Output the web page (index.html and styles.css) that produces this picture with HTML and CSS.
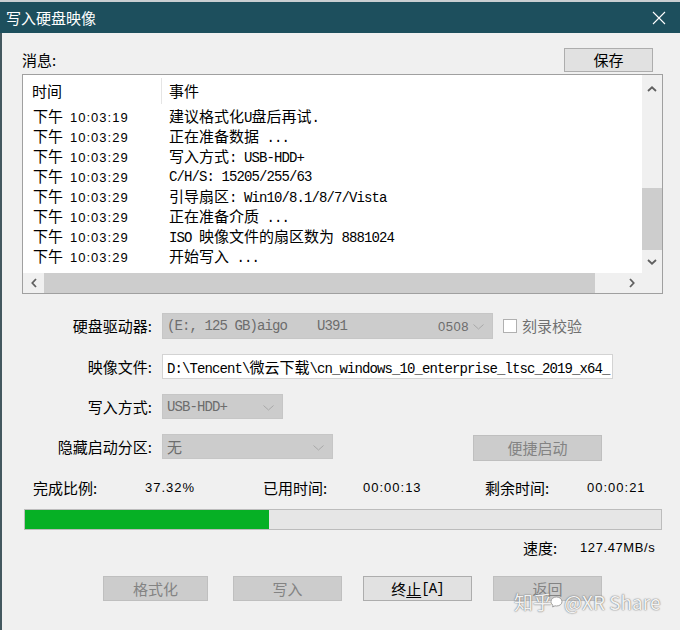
FILE: index.html
```html
<!DOCTYPE html>
<html lang="zh-CN">
<head>
<meta charset="utf-8">
<title>写入硬盘映像</title>
<link rel="stylesheet" href="styles.css">
</head>
<body>
<div class="window">
  <div class="titlebar">
    <span class="title">写入硬盘映像</span>
    <svg class="close" width="14" height="14" viewBox="0 0 14 14"><path d="M1 1L13 13M13 1L1 13" stroke="#fff" stroke-width="1.1" fill="none"/></svg>
  </div>
  <div class="body">
    <div class="msg-head">
      <span class="msg-label">消息:</span>
      <div class="btn save">保存</div>
    </div>
    <div class="listbox">
      <div class="lb-main">
        <div class="lb-content">
          <div class="lb-header"><div class="hcol1">时间</div><div class="hcol2">事件</div></div>
          <div class="row"><div class="tcol"><span class="ampm">下午</span><span class="time">10:03:19</span></div><div class="ecol"><span class="c">建议格式化</span>U<span class="c">盘后再试</span>.</div></div>
          <div class="row"><div class="tcol"><span class="ampm">下午</span><span class="time">10:03:29</span></div><div class="ecol"><span class="c">正在准备数据</span> ...</div></div>
          <div class="row"><div class="tcol"><span class="ampm">下午</span><span class="time">10:03:29</span></div><div class="ecol"><span class="c">写入方式</span>: USB-HDD+</div></div>
          <div class="row"><div class="tcol"><span class="ampm">下午</span><span class="time">10:03:29</span></div><div class="ecol">C/H/S: 15205/255/63</div></div>
          <div class="row"><div class="tcol"><span class="ampm">下午</span><span class="time">10:03:29</span></div><div class="ecol"><span class="c">引导扇区</span>: Win10/8.1/8/7/Vista</div></div>
          <div class="row"><div class="tcol"><span class="ampm">下午</span><span class="time">10:03:29</span></div><div class="ecol"><span class="c">正在准备介质</span> ...</div></div>
          <div class="row"><div class="tcol"><span class="ampm">下午</span><span class="time">10:03:29</span></div><div class="ecol">ISO <span class="c">映像文件的扇区数为</span> 8881024</div></div>
          <div class="row"><div class="tcol"><span class="ampm">下午</span><span class="time">10:03:29</span></div><div class="ecol"><span class="c">开始写入</span> ...</div></div>
        </div>
        <div class="vscroll">
          <div class="sb-btn up"><svg width="10" height="6" viewBox="0 0 10 6"><path d="M1 5L5 1.3L9 5" stroke="#606060" stroke-width="1.8" fill="none"/></svg></div>
          <div class="sb-track"><div class="vthumb"></div></div>
          <div class="sb-btn down"><svg width="10" height="6" viewBox="0 0 10 6"><path d="M1 1L5 4.7L9 1" stroke="#606060" stroke-width="1.8" fill="none"/></svg></div>
        </div>
      </div>
      <div class="lb-bottom">
        <div class="hscroll">
          <div class="sb-hbtn"><svg width="6" height="10" viewBox="0 0 6 10"><path d="M5 1L1.3 5L5 9" stroke="#606060" stroke-width="1.8" fill="none"/></svg></div>
          <div class="hthumb"></div>
          <div class="sb-hspace"></div>
          <div class="sb-hbtn"><svg width="6" height="10" viewBox="0 0 6 10"><path d="M1 1L4.7 5L1 9" stroke="#606060" stroke-width="1.8" fill="none"/></svg></div>
        </div>
        <div class="corner"></div>
      </div>
    </div>

    <div class="form">
      <div class="frow r1">
        <span class="lbl">硬盘驱动器:</span>
        <div class="combo w331">
          <span class="mono">(E:, 125 GB)aigo</span><span class="mono u391">U391</span><span class="sans n0508">0508</span>
          <svg class="chev" width="11" height="6" viewBox="0 0 11 6"><path d="M0.5 0.5L5.5 5L10.5 0.5" stroke="#a8a8a8" stroke-width="1" fill="none"/></svg>
        </div>
        <div class="checkbox"></div>
        <span class="cblabel">刻录校验</span>
      </div>
      <div class="frow">
        <span class="lbl">映像文件:</span>
        <div class="input"><span class="mono">D:\Tencent\<span class="c">微云下载</span>\cn_windows_10_enterprise_ltsc_2019_x64_</span></div>
      </div>
      <div class="frow">
        <span class="lbl">写入方式:</span>
        <div class="combo w121">
          <span class="mono">USB-HDD+</span>
          <svg class="chev" width="11" height="6" viewBox="0 0 11 6"><path d="M0.5 0.5L5.5 5L10.5 0.5" stroke="#a8a8a8" stroke-width="1" fill="none"/></svg>
        </div>
      </div>
      <div class="frow">
        <span class="lbl">隐藏启动分区:</span>
        <div class="combo w171">
          <span class="cjk">无</span>
          <svg class="chev" width="11" height="6" viewBox="0 0 11 6"><path d="M0.5 0.5L5.5 5L10.5 0.5" stroke="#a8a8a8" stroke-width="1" fill="none"/></svg>
        </div>
        <div class="btn disabled quick">便捷启动</div>
      </div>
    </div>

    <div class="stats">
      <span class="s-l1">完成比例:</span>
      <span class="num s-v1">37.32%</span>
      <span class="s-l2">已用时间:</span>
      <span class="num s-v2">00:00:13</span>
      <span class="s-l3">剩余时间:</span>
      <span class="num">00:00:21</span>
    </div>

    <div class="progress"><div class="fill" style="width: 38.4%"></div></div>

    <div class="speed">
      <span class="sp-l">速度:</span>
      <span class="num">127.47MB/s</span>
    </div>

    <div class="btns">
      <div class="btn disabled b1">格式化</div>
      <div class="btn disabled b2">写入</div>
      <div class="btn b3">终<u>止</u><span class="mono">[A]</span></div>
      <div class="btn disabled b3">返回</div>
    </div>
  </div>

  <div class="watermark">知乎 <svg class="wm-icon" width="13" height="12" viewBox="0 0 13 12"><path d="M6.5 1C3.2 1 1 3 1 5.6c0 1.5.8 2.8 2 3.6L2.6 11l2.4-1.2c.5.1 1 .2 1.5.2 3.3 0 5.5-2 5.5-4.4S9.8 1 6.5 1z" fill="#fff" stroke="#8a8a8a" stroke-width="0.8"/></svg>@XR Share</div>
</div>
</body>
</html>
```

FILE: styles.css
```css
* {
  box-sizing: border-box;
}

body {
  margin: 0;
  background: #f0f0f0;
  font-family: "Noto Sans CJK SC", sans-serif;
  font-size: 15px;
  color: #000;
}

.window {
  position: relative;
  width: 680px;
  height: 630px;
  overflow: hidden;
  display: flex;
  flex-direction: column;
  background: #f0f0f0;
}

.titlebar {
  height: 33px;
  flex: none;
  border-top: 2px solid #c9cfd2;
  background: #1d4f5d;
  color: #fff;
  display: flex;
  align-items: center;
  justify-content: space-between;
  padding: 0 14px 0 6px;
}

.title {
  font-size: 15px;
  line-height: 20px;
}

.body {
  flex: 1;
  border-left: 2px solid #44585f;
  padding: 15px 0 0 20px;
  display: flex;
  flex-direction: column;
}

.msg-head {
  width: 641px;
  height: 24px;
  display: flex;
  align-items: center;
  justify-content: space-between;
  padding-right: 10px;
}

.msg-label {
  line-height: 20px;
}

.btn {
  height: 24px;
  border: 1px solid #adadad;
  background: #e1e1e1;
  display: flex;
  align-items: center;
  justify-content: center;
  font-size: 15px;
  line-height: 20px;
  color: #000;
}

.btn.disabled {
  background: #cccccc;
  border-color: #bfbfbf;
  color: #838383;
}

.save {
  width: 89px;
}

/* list box */
.listbox {
  margin-top: 2px;
  width: 641px;
  height: 220px;
  border: 1px solid #a0a0a0;
  background: #fff;
  display: flex;
  flex-direction: column;
}

.lb-main {
  height: 198px;
  display: flex;
}

.lb-content {
  flex: 1;
  overflow: hidden;
}

.lb-header {
  height: 32px;
  display: flex;
  align-items: center;
  line-height: 20px;
}

.hcol1 {
  width: 139px;
  padding-left: 9px;
  border-right: 1px solid #e5e5e5;
  height: 26px;
  display: flex;
  align-items: center;
}

.hcol2 {
  padding-left: 7px;
}

.row {
  height: 20px;
  display: flex;
  align-items: center;
  line-height: 20px;
}

.tcol {
  width: 138px;
  padding-left: 10px;
  display: flex;
  align-items: baseline;
}

.ampm {
  font-size: 15px;
}

.time {
  font-family: "Liberation Sans", sans-serif;
  font-size: 13px;
  letter-spacing: 1px;
  margin-left: 7px;
}

.ecol {
  padding-left: 8px;
  font-family: "Liberation Mono", monospace;
  font-size: 14px;
  letter-spacing: -0.9px;
  white-space: pre;
}

.c {
  font-family: "Noto Sans CJK SC", sans-serif;
  font-size: 15px;
  letter-spacing: 0;
}

.vscroll {
  width: 20px;
  background: #f0f0f0;
  display: flex;
  flex-direction: column;
}

.sb-btn {
  display: flex;
  align-items: center;
  justify-content: center;
}

.sb-btn.up {
  height: 25px;
  padding-top: 2px;
}

.sb-btn.down {
  height: 23px;
}

.sb-track {
  flex: 1;
  display: flex;
  flex-direction: column;
  justify-content: flex-end;
}

.vthumb {
  height: 62px;
  background: #cdcdcd;
}

.lb-bottom {
  height: 20px;
  display: flex;
}

.hscroll {
  flex: 1;
  display: flex;
  background: #f0f0f0;
}

.sb-hbtn {
  width: 21px;
  display: flex;
  align-items: center;
  justify-content: center;
}

.hthumb {
  width: 551px;
  background: #cdcdcd;
}

.sb-hspace {
  flex: 1;
}

.corner {
  width: 20px;
  background: #f0f0f0;
}

/* form */
.form {
  margin-top: 19px;
  display: flex;
  flex-direction: column;
  gap: 15px;
}

.frow {
  height: 25px;
  display: flex;
  align-items: center;
}

.frow.r1 {
  height: 26px;
}

.lbl {
  width: 130px;
  margin-right: 10px;
  text-align: right;
  line-height: 20px;
}

.combo {
  height: 100%;
  background: #cccccc;
  border: 1px solid #c6c6c6;
  display: flex;
  align-items: center;
  padding-left: 4px;
  color: #6d6d6d;
  position: relative;
}

.combo .chev {
  position: absolute;
  right: 8px;
  top: 50%;
  margin-top: -2px;
}

.w331 { width: 331px; }
.w121 { width: 121px; }
.w171 { width: 171px; }

.mono {
  font-family: "Liberation Mono", monospace;
  font-size: 14px;
  letter-spacing: -0.9px;
  white-space: pre;
}

.sans {
  font-family: "Liberation Sans", sans-serif;
  font-size: 13px;
  letter-spacing: 0.5px;
}

.cjk {
  font-size: 15px;
}

.u391 {
  margin-left: 30px;
}

.n0508 {
  margin-left: 91px;
}

.checkbox {
  width: 14px;
  height: 14px;
  margin-left: 10px;
  background: #fff;
  border: 1px solid #b0b0b0;
}

.cblabel {
  margin-left: 5px;
  color: #707070;
  line-height: 20px;
}

.input {
  width: 451px;
  height: 100%;
  background: #fff;
  border: 1px solid #d3d3d3;
  display: flex;
  align-items: center;
  padding-left: 4px;
  overflow: hidden;
}

.quick {
  width: 129px;
  height: 26px;
  margin-left: 140px;
  margin-top: 2px;
}

/* stats */
.stats {
  margin-top: 19px;
  height: 20px;
  display: flex;
  align-items: center;
  padding-left: 11px;
  line-height: 20px;
}

.s-l1 { width: 112px; }
.s-v1 { width: 118px; }
.s-l2 { width: 100px; }
.s-v2 { width: 122px; }
.s-l3 { width: 102px; }

.num {
  font-family: "Liberation Sans", sans-serif;
  font-size: 13px;
  letter-spacing: 1px;
}

.progress {
  margin-top: 11px;
  margin-left: 2px;
  width: 638px;
  height: 21px;
  border: 1px solid #bcbcbc;
  background: #e6e6e6;
}

.fill {
  height: 100%;
  background: #06b025;
}

.speed {
  margin-top: 8px;
  height: 20px;
  display: flex;
  align-items: center;
  padding-left: 501px;
  line-height: 20px;
}

.sp-l {
  width: 57px;
}

.speed .num {
  letter-spacing: 0.6px;
}

.btns {
  margin-top: 18px;
  display: flex;
  padding-left: 81px;
}

.btns .btn {
  height: 25px;
}

.b1 { width: 105px; }
.b2 { width: 109px; margin-left: 25px; }
.b3 { width: 109px; margin-left: 21px; }

.b3 u {
  text-decoration-thickness: 1px;
  text-underline-offset: 2px;
}

.watermark {
  position: absolute;
  left: 514px;
  top: 589px;
  font-size: 19px;
  line-height: 26px;
  color: rgba(255, 255, 255, 0.92);
  text-shadow: 0 0 1px #6a6a6a, 0 0 2px rgba(0, 0, 0, 0.35);
  font-family: "Noto Sans CJK SC", "Liberation Sans", sans-serif;
  white-space: nowrap;
  display: flex;
  align-items: center;
}

.wm-icon {
  margin: 0 1px 0 -2px;
}
```
